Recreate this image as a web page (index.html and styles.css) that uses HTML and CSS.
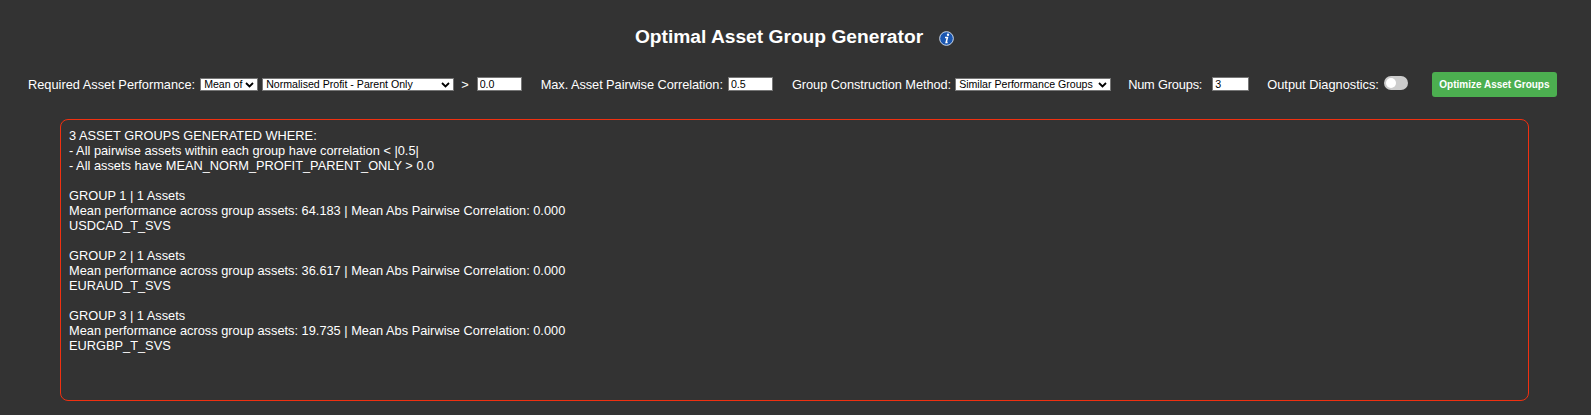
FILE: index.html
```html
<!DOCTYPE html>
<html lang="en">
<head>
<meta charset="utf-8">
<title>Optimal Asset Group Generator</title>
<link rel="stylesheet" href="styles.css">
</head>
<body>
<header class="title-row">
  <h1 class="title">Optimal Asset Group Generator</h1>
  <svg class="info" viewBox="0 0 16 16" width="15" height="15" aria-hidden="true">
    <circle cx="8" cy="8" r="7.3" fill="#1a56b0" stroke="#d5e3f5" stroke-width="1"/>
    <circle cx="9.6" cy="4" r="1.25" fill="#fff"/>
    <path d="M6.4 7h2.6l-1.4 5.2h1.6" fill="none" stroke="#fff" stroke-width="1.6"/>
  </svg>
</header>
<form class="controls">
  <div class="group">
    <label class="lbl">Required Asset Performance:</label>
    <select class="sel sel-agg"><option>Mean of</option></select>
    <select class="sel sel-metric"><option>Normalised Profit - Parent Only</option></select>
    <span class="gt">&gt;</span>
    <input class="num num-perf" type="text" value="0.0">
  </div>
  <div class="group">
    <label class="lbl lbl-tight">Max. Asset Pairwise Correlation:</label>
    <input class="num num-corr" type="text" value="0.5">
  </div>
  <div class="group">
    <label class="lbl lbl-tight">Group Construction Method:</label>
    <select class="sel sel-method"><option>Similar Performance Groups</option></select>
  </div>
  <div class="group group-num">
    <label class="lbl lbl-tighter">Num Groups:</label>
    <input class="num num-groups" type="text" value="3">
  </div>
  <div class="group group-diag">
    <label class="lbl">Output Diagnostics:</label>
    <span class="toggle"><span class="knob"></span></span>
  </div>
  <button class="go" type="button">Optimize Asset Groups</button>
</form>
<pre class="output">3 ASSET GROUPS GENERATED WHERE:
- All pairwise assets within each group have correlation &lt; |0.5|
- All assets have MEAN_NORM_PROFIT_PARENT_ONLY &gt; 0.0

GROUP 1 | 1 Assets
Mean performance across group assets: 64.183 | Mean Abs Pairwise Correlation: 0.000
USDCAD_T_SVS

GROUP 2 | 1 Assets
Mean performance across group assets: 36.617 | Mean Abs Pairwise Correlation: 0.000
EURAUD_T_SVS

GROUP 3 | 1 Assets
Mean performance across group assets: 19.735 | Mean Abs Pairwise Correlation: 0.000
EURGBP_T_SVS</pre>
</body>
</html>
```
FILE: styles.css
```css
html, body {
  margin: 0;
  height: 100%;
}
body {
  background: #333333;
  color: #ffffff;
  font-family: "Liberation Sans", Arial, sans-serif;
  overflow: hidden;
}
.title-row {
  display: flex;
  justify-content: center;
  align-items: center;
  gap: 16px;
  padding: 26px 2px 0 0;
  height: 22px;
}
.title {
  margin: 0;
  font-size: 19.2px;
  line-height: 22px;
  font-weight: 700;
}
.info {
  margin-top: 2px;
}
.controls {
  display: flex;
  align-items: center;
  margin: 24px 0 0 28px;
  height: 25px;
  white-space: nowrap;
}
.group {
  display: flex;
  align-items: center;
}
.group + .group {
  margin-left: 19px;
}
.group + .group-num {
  margin-left: 17px;
}
.group + .group-diag {
  margin-left: 18px;
}
.lbl {
  font-size: 12.8px;
  flex: none;
}
.lbl-tight {
  letter-spacing: -0.06px;
}
.lbl-tighter {
  letter-spacing: -0.18px;
}
.sel {
  appearance: none;
  box-sizing: border-box;
  height: 13px;
  flex: none;
  font-family: "Liberation Sans", Arial, sans-serif;
  font-size: 10.6px;
  line-height: 11px;
  color: #000;
  border: 1px solid #767676;
  border-radius: 0;
  padding: 0 0 0 3px;
  background-color: #fff;
  background-image: url("data:image/svg+xml,%3Csvg xmlns='http://www.w3.org/2000/svg' width='9' height='6'%3E%3Cpath d='M1 1l3.5 3.5L8 1' fill='none' stroke='%23000' stroke-width='1.8'/%3E%3C/svg%3E");
  background-repeat: no-repeat;
  background-position: right 3px center;
}
.sel-agg { width: 58px; margin-left: 5px; }
.sel-metric { width: 192px; margin-left: 4px; }
.sel-method { width: 156px; margin-left: 4px; }
.gt { font-size: 12.8px; margin: 0 8px 0 7px; }
.num {
  box-sizing: border-box;
  height: 14px;
  flex: none;
  margin-top: -1px;
  font-family: "Liberation Sans", Arial, sans-serif;
  font-size: 10.67px;
  background: #fff;
  color: #000;
  border: 1px solid #767676;
  border-radius: 0;
  padding: 0 2px;
}
.num-perf { width: 45px; }
.num-corr { width: 45px; margin-left: 5px; }
.num-groups { width: 37px; margin-left: 10px; }
.toggle {
  display: inline-block;
  position: relative;
  flex: none;
  width: 24px;
  height: 14px;
  margin-left: 5px;
  margin-top: -4px;
  background: #cccccc;
  border-radius: 7px;
}
.knob {
  position: absolute;
  left: 2px;
  top: 2px;
  width: 10px;
  height: 10px;
  background: #fff;
  border-radius: 50%;
}
.go {
  flex: none;
  width: 125px;
  height: 25px;
  margin-left: 24px;
  background: #4caf50;
  color: #fff;
  border: 0;
  border-radius: 3px;
  font-family: "Liberation Sans", Arial, sans-serif;
  font-size: 10px;
  font-weight: 700;
  padding: 0;
}
.output {
  box-sizing: border-box;
  width: 1469px;
  height: 282px;
  margin: 22px 0 0 60px;
  padding: 8px;
  border: 1px solid #f03010;
  border-radius: 8px;
  font-family: "Liberation Sans", Arial, sans-serif;
  font-size: 12.8px;
  line-height: 15px;
  color: #fff;
  white-space: pre-wrap;
}
```
